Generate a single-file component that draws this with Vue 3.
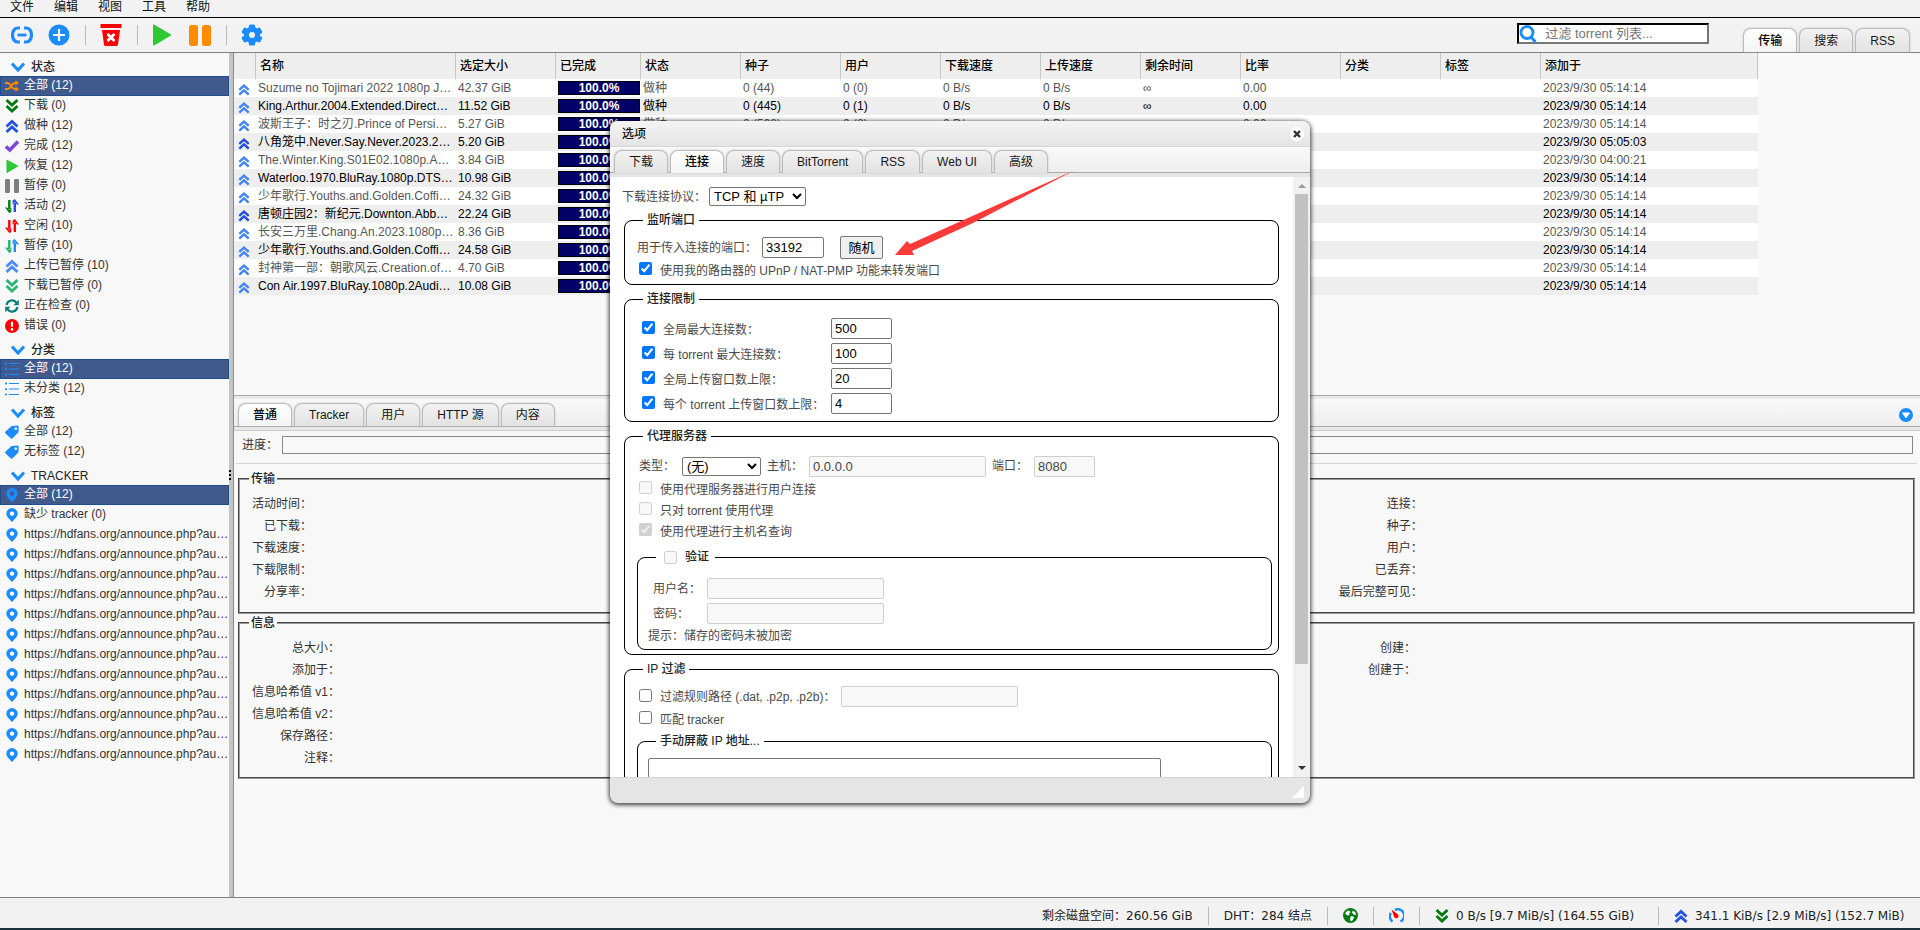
<script setup>
import { ref } from 'vue'

const menus = ['文件', '编辑', '视图', '工具', '帮助']

const statusFilters = [
  { icon: 'shuffle', color: '#ff8c00', text: '全部 (12)', active: true },
  { icon: 'down', color: '#007a0e', text: '下载 (0)' },
  { icon: 'up', color: '#2352e0', text: '做种 (12)' },
  { icon: 'check', color: '#7a45dd', text: '完成 (12)' },
  { icon: 'play', color: '#2dc834', text: '恢复 (12)' },
  { icon: 'pause', color: '#7f7f7f', text: '暂停 (0)' },
  { icon: 'arrows', color: '#007a0e', accent: '#2352e0', text: '活动 (2)' },
  { icon: 'arrows', color: '#ff0000', accent: '#ff0000', text: '空闲 (10)' },
  { icon: 'arrows', color: '#1fb36b', accent: '#1a8cff', text: '暂停 (10)' },
  { icon: 'up', color: '#4a8cf7', text: '上传已暂停 (10)' },
  { icon: 'down', color: '#2bb673', text: '下载已暂停 (0)' },
  { icon: 'sync', color: '#0b7d78', text: '正在检查 (0)' },
  { icon: 'error', color: '#ff0000', text: '错误 (0)' },
]
const blue = '#1a8cff'
const announce = Array.from({ length: 12 }, () => ({
  icon: 'pin', color: blue, text: 'https://hdfans.org/announce.php?au…',
}))
const groups = [
  { title: '状态', items: statusFilters },
  {
    title: '分类',
    items: [
      { icon: 'list', color: blue, text: '全部 (12)', active: true },
      { icon: 'list', color: blue, text: '未分类 (12)' },
    ],
  },
  {
    title: '标签',
    items: [
      { icon: 'tag', color: blue, text: '全部 (12)' },
      { icon: 'tag', color: blue, text: '无标签 (12)' },
    ],
  },
  {
    title: 'TRACKER',
    items: [
      { icon: 'pin', color: blue, text: '全部 (12)', active: true },
      { icon: 'pin', color: blue, text: '缺少 tracker (0)' },
      ...announce,
    ],
  },
]

const columns = [
  ['', 22], ['名称', 200], ['选定大小', 100], ['已完成', 85], ['状态', 100], ['种子', 100],
  ['用户', 100], ['下载速度', 100], ['上传速度', 100], ['剩余时间', 100], ['比率', 100],
  ['分类', 100], ['标签', 100], ['添加于', 217],
]
const torrent = (name, size, seeds, peers, added = '2023/9/30 05:14:14', uploading = false) =>
  ({ name, size, seeds, peers, added, uploading })
const torrents = [
  torrent('Suzume no Tojimari 2022 1080p J…', '42.37 GiB', '0 (44)', '0 (0)'),
  torrent('King.Arthur.2004.Extended.Direct…', '11.52 GiB', '0 (445)', '0 (1)'),
  torrent('波斯王子：时之刃.Prince of Persi…', '5.27 GiB', '0 (592)', '0 (2)'),
  torrent('八角笼中.Never.Say.Never.2023.2…', '5.20 GiB', '0 (120)', '1 (4)', '2023/9/30 05:05:03', true),
  torrent('The.Winter.King.S01E02.1080p.A…', '3.84 GiB', '0 (31)', '0 (0)', '2023/9/30 04:00:21'),
  torrent('Waterloo.1970.BluRay.1080p.DTS…', '10.98 GiB', '0 (86)', '0 (1)'),
  torrent('少年歌行.Youths.and.Golden.Coffi…', '24.32 GiB', '0 (57)', '0 (0)'),
  torrent('唐顿庄园2：新纪元.Downton.Abb…', '22.24 GiB', '0 (73)', '1 (2)', undefined, true),
  torrent('长安三万里.Chang.An.2023.1080p…', '8.36 GiB', '0 (210)', '0 (3)'),
  torrent('少年歌行.Youths.and.Golden.Coffi…', '24.58 GiB', '0 (62)', '0 (0)'),
  torrent('封神第一部：朝歌风云.Creation.of…', '4.70 GiB', '0 (340)', '0 (5)'),
  torrent('Con Air.1997.BluRay.1080p.2Audi…', '10.08 GiB', '0 (98)', '0 (1)'),
]

const viewTabs = ['传输', '搜索', 'RSS']
const detailTabs = ['普通', 'Tracker', '用户', 'HTTP 源', '内容']
const optionTabs = ['下载', '连接', '速度', 'BitTorrent', 'RSS', 'Web UI', '高级']

const transferInfo = [
  ['活动时间：', '剩余时间：', '连接：'],
  ['已下载：', '已上传：', '种子：'],
  ['下载速度：', '上传速度：', '用户：'],
  ['下载限制：', '上传限制：', '已丢弃：'],
  ['分享率：', '下次汇报：', '最后完整可见：'],
]
const generalInfo = [
  ['总大小：', '区块：', '创建：'],
  ['添加于：', '完成于：', '创建于：'],
  ['信息哈希值 v1：', '', ''],
  ['信息哈希值 v2：', '', ''],
  ['保存路径：', '', ''],
  ['注释：', '', ''],
]

const protocol = ref('TCP 和 µTP')
const port = ref('33192')
const upnp = ref(true)
const limits = ref([
  { on: true, label: '全局最大连接数：', value: '500' },
  { on: true, label: '每 torrent 最大连接数：', value: '100' },
  { on: true, label: '全局上传窗口数上限：', value: '20' },
  { on: true, label: '每个 torrent 上传窗口数上限：', value: '4' },
])
const proxyChecks = [
  { id: 'proxyPeers', on: false, label: '使用代理服务器进行用户连接' },
  { id: 'proxyTorrents', on: false, label: '只对 torrent 使用代理' },
  { id: 'proxyHosts', on: true, label: '使用代理进行主机名查询' },
]
const proxyType = ref('(无)')
const filterPath = ref(false)
const filterTracker = ref(false)
</script>

<template>
  <div class="app">
    <svg class="defs" width="0" height="0" aria-hidden="true">
      <symbol id="up" viewBox="0 0 14 14"><path d="M1.5 7.5 7 2.5l5.5 5M1.5 13 7 8l5.5 5" fill="none" stroke="currentColor" stroke-width="2.8" /></symbol>
      <symbol id="down" viewBox="0 0 14 14"><path d="M1.5 1 7 6l5.5-5M1.5 7 7 12l5.5-5" fill="none" stroke="currentColor" stroke-width="2.8" /></symbol>
      <symbol id="chevron" viewBox="0 0 14 14"><path d="M1 3.5 7 10l6-6.5" fill="none" stroke="currentColor" stroke-width="3" /></symbol>
      <symbol id="shuffle" viewBox="0 0 16 14"><path d="M0 3.5h3.2c3.6 0 4.2 7 7.8 7h2M0 10.5h3.2c3.6 0 4.2-7 7.8-7h2" fill="none" stroke="currentColor" stroke-width="2.2" /><path d="M12 .5 16 3.5l-4 3zM12 7.5l4 3-4 3z" fill="currentColor" /></symbol>
      <symbol id="check" viewBox="0 0 14 14"><path d="M1 7.5 4.8 11 13 2.5" fill="none" stroke="currentColor" stroke-width="3.4" /></symbol>
      <symbol id="play" viewBox="0 0 14 14"><path d="M2 1.2 12.8 7 2 13.5z" fill="currentColor" stroke="currentColor" stroke-linejoin="round" /></symbol>
      <symbol id="pause" viewBox="0 0 14 14"><rect width="5" height="14" rx="1.2" fill="currentColor" /><rect x="9" width="5" height="14" rx="1.2" fill="currentColor" /></symbol>
      <symbol id="arrows" viewBox="0 0 14 14"><path d="M4.3 1v9" stroke="currentColor" stroke-width="2.4" /><path d="M0 8.6h2.2L4.3 11l2-2.4V13L4.3 14z" fill="currentColor" /><path d="M9.8 13V4" stroke="var(--accent)" stroke-width="2.4" /><path d="M14 5.4h-2L9.8 3 7.6 5.4V1.6L9.8 0z" fill="var(--accent)" /></symbol>
      <symbol id="sync" viewBox="0 0 14 14"><path d="M1.5 6A5.6 5.6 0 0 1 11.6 3.8M12.5 8A5.6 5.6 0 0 1 2.4 10.2" fill="none" stroke="currentColor" stroke-width="2.2" /><path d="M13.8 .8v5.4H8.4zM.2 13.2V7.8h5.4z" fill="currentColor" /></symbol>
      <symbol id="error" viewBox="0 0 14 14"><circle cx="7" cy="7" r="7" fill="currentColor" /><path d="M7 2.8v5" stroke="#fff" stroke-width="2.2" /><circle cx="7" cy="10.4" r="1.3" fill="#fff" /></symbol>
      <symbol id="list" viewBox="0 0 14 14"><path d="M4 1.5h10M4 7h10M4 12.5h10" stroke="currentColor" stroke-width="1.2" /><circle cx="1" cy="1.5" r="1.1" fill="currentColor" /><circle cx="1" cy="7" r="1.1" fill="currentColor" /><circle cx="1" cy="12.5" r="1.1" fill="currentColor" /></symbol>
      <symbol id="tag" viewBox="0 0 14 14"><path fill-rule="evenodd" fill="currentColor" d="M7.4.9 12.3.6q1.4 0 1.4 1.4l-.2 4.8q0 .6-.5 1L7.6 13.3q-1 .9-2 0L.6 8.6q-1-1 0-2L6.3 1.3q.5-.4 1.1-.4zM10.8 2.3a1.3 1.3 0 1 0 .01 0z" /></symbol>
      <symbol id="pin" viewBox="0 0 14 14"><path fill-rule="evenodd" fill="currentColor" d="M7 0a5.7 5.7 0 0 1 5.7 5.7C12.7 8.5 9 11.5 7 14.2 5 11.5 1.3 8.5 1.3 5.7A5.7 5.7 0 0 1 7 0zm0 3.5a2.2 2.2 0 1 0 .01 0z" /></symbol>
    </svg>

    <nav class="menubar">
      <a v-for="m in menus" :key="m" href="#">{{ m }}</a>
    </nav>

    <header class="toolbar">
      <div class="tools">
        <button type="button" aria-label="添加链接">
          <svg width="22" height="22" viewBox="1 0 22 22" fill="none" stroke="#1a8cff" stroke-width="3.2"><path d="M10 4H7.500a5 7 0 0 0 0 14H10M14 4h2.500a5 7 0 0 1 0 14H14" /><path d="M7.500 11h9" stroke-width="2.800" /></svg>
        </button>
        <button type="button" aria-label="添加文件">
          <svg width="22" height="22" viewBox="0 0 22 22"><circle cx="11" cy="11" r="10.500" fill="#1a8cff" /><path d="M11 5v12M5 11h12" stroke="#fff" stroke-width="2.200" /></svg>
        </button>
        <span class="sep"></span>
        <button type="button" aria-label="删除">
          <svg width="22" height="22" viewBox="0 0 22 22"><path d="M.5 0h21v4H.5zM2 6h18l-2 14.500q-.2 1.500-1.700 1.500H5.700Q4.200 22 4 20.500z" fill="#f00" /><path d="m7.500 10 7 7m0-7-7 7" stroke="#fff" stroke-width="2.800" /></svg>
        </button>
        <span class="sep"></span>
        <button type="button" aria-label="恢复">
          <svg width="22" height="22" viewBox="0 0 22 22"><path d="M2 1.500 18 11 2 20.500z" fill="#2dc834" stroke="#2dc834" stroke-width="2" stroke-linejoin="round" /></svg>
        </button>
        <button type="button" aria-label="暂停">
          <svg width="22" height="22" viewBox="0 0 22 22" fill="#ff8c00"><rect y="1" width="9" height="21" rx="2.500" /><rect x="13" y="1" width="9" height="21" rx="2.500" /></svg>
        </button>
        <span class="sep"></span>
        <button type="button" aria-label="选项">
          <svg width="22" height="22" viewBox="-11 -11 22 22"><g fill="#1a8cff"><circle r="8.200" /><rect v-for="a in [0, 60, 120]" :key="a" x="-3.200" y="-10.600" width="6.400" height="21.200" rx="1.500" :transform="`rotate(${a})`" /></g><circle r="3" fill="#f2f2f2" /></svg>
        </button>
      </div>
      <label class="search">
        <svg width="18" height="18" viewBox="0 0 18 18" fill="none" stroke="#1a8cff"><circle cx="8" cy="7.500" r="6" stroke-width="2.800" /><path d="m12 12 4.500 5" stroke-width="3" /></svg>
        <input type="text" placeholder="过滤 torrent 列表..." aria-label="过滤 torrent 列表" />
      </label>
      <div class="tabs view-tabs">
        <button v-for="(t, i) in viewTabs" :key="t" type="button" class="tab" :class="{ on: i === 0 }">{{ t }}</button>
      </div>
    </header>

    <main class="desktop">
      <aside class="sidebar">
        <section v-for="g in groups" :key="g.title">
          <h2><svg width="14" height="14"><use href="#chevron" /></svg>{{ g.title }}</h2>
          <ul>
            <li v-for="(f, i) in g.items" :key="i" :class="{ active: f.active }">
              <svg width="14" height="14" :style="{ color: f.color, '--accent': f.accent }"><use :href="'#' + f.icon" /></svg>
              <a href="#">{{ f.text }}</a>
            </li>
          </ul>
        </section>
      </aside>
      <div class="splitter"><i></i><i></i><i></i></div>

      <div class="content">
        <section class="list">
          <table>
            <colgroup><col v-for="(c, i) in columns" :key="i" :style="{ width: c[1] + 'px' }" /></colgroup>
            <thead>
              <tr><th v-for="(c, i) in columns" :key="i">{{ c[0] }}</th></tr>
            </thead>
            <tbody>
              <tr v-for="(t, i) in torrents" :key="i">
                <td class="state"><svg width="12" height="13" :class="{ uploading: t.uploading }"><use href="#up" /></svg></td>
                <td>{{ t.name }}</td>
                <td>{{ t.size }}</td>
                <td><div class="done">100.0%</div></td>
                <td>做种</td>
                <td>{{ t.seeds }}</td>
                <td>{{ t.peers }}</td>
                <td>0 B/s</td>
                <td>0 B/s</td>
                <td>∞</td>
                <td>0.00</td>
                <td></td>
                <td></td>
                <td>{{ t.added }}</td>
              </tr>
            </tbody>
          </table>
        </section>

        <section class="details">
          <div class="tabstrip">
            <div class="tabs">
              <button v-for="(t, i) in detailTabs" :key="t" type="button" class="tab" :class="{ on: i === 0 }">{{ t }}</button>
            </div>
            <button type="button" class="collapse" aria-label="折叠">
              <svg width="14" height="14" viewBox="0 0 14 14"><circle cx="7" cy="7" r="7" fill="#1a8cff" /><path d="M3.500 5h7L7 9.800z" fill="#fff" stroke="#fff" stroke-linejoin="round" /></svg>
            </button>
          </div>
          <div class="progress"><span>进度：</span><div></div></div>
          <hr />
          <fieldset class="info transfer">
            <legend>传输</legend>
            <div class="grid">
              <template v-for="(r, i) in transferInfo" :key="i">
                <template v-for="(c, j) in r" :key="j"><span>{{ c }}</span><span></span></template>
              </template>
            </div>
          </fieldset>
          <fieldset class="info general">
            <legend>信息</legend>
            <div class="grid">
              <template v-for="(r, i) in generalInfo" :key="i">
                <template v-for="(c, j) in r" :key="j"><span>{{ c }}</span><span></span></template>
              </template>
            </div>
          </fieldset>
        </section>
      </div>
    </main>

    <footer class="statusbar">
      <span>剩余磁盘空间：260.56 GiB</span>
      <span>DHT：284 结点</span>
      <span>
        <svg width="15" height="15" viewBox="0 0 15 15"><circle cx="7.500" cy="7.500" r="7.500" fill="#067a12" /><path d="M2 5.500 4.500 2.500l2.500.5.500 1.500-1.500 1 .5 1.500-2 .5zM10 2.500l2.500 2 .5 2.500-2.500-.5-1.500-2zM8 8l2.500.5.5 1.500-2 3-1.500.3-.5-2.500z" fill="#fff" /></svg>
      </span>
      <span>
        <svg width="15" height="15" viewBox="0 0 15 15"><path d="M3.500 13.500A6.300 6.300 0 0 1 1.800 5M6 1.800A6.300 6.300 0 0 1 11.500 13.500" fill="none" stroke="#1a8cff" stroke-width="2.400" /><path d="M2.500 1.500 9 6.500A2.300 2.300 0 1 1 5 8.500z" fill="#f00" /></svg>
      </span>
      <span class="down"><svg width="14" height="16"><use href="#down" /></svg>0 B/s [9.7 MiB/s] (164.55 GiB)</span>
      <span class="up"><svg width="14" height="16"><use href="#up" /></svg>341.1 KiB/s [2.9 MiB/s] (152.7 MiB)</span>
    </footer>

    <section class="dialog" role="dialog" aria-labelledby="dialogTitle">
      <div class="titlebar">
        <h1 id="dialogTitle">选项</h1>
        <button type="button" aria-label="关闭"><svg width="14" height="14" viewBox="0 0 14 14"><circle cx="7" cy="7" r="7" fill="#fff" /><path d="m4 4 6 6m0-6-6 6" stroke="#333" stroke-width="2.400" /></svg></button>
      </div>
      <div class="tabstrip">
        <div class="tabs">
          <button v-for="(t, i) in optionTabs" :key="t" type="button" class="tab" :class="{ on: i === 1 }">{{ t }}</button>
        </div>
      </div>
      <div class="viewport">
        <form class="options" @submit.prevent>
          <div class="row protocol">
            <label for="protocol">下载连接协议：</label>
            <select id="protocol" v-model="protocol"><option>TCP 和 µTP</option><option>TCP</option><option>µTP</option></select>
          </div>

          <fieldset class="box port">
            <legend>监听端口</legend>
            <div class="row">
              <label for="port">用于传入连接的端口：</label>
              <input id="port" v-model="port" type="text" />
              <button type="button" class="random">随机</button>
            </div>
            <div class="row check">
              <input id="upnp" v-model="upnp" type="checkbox" /><label for="upnp">使用我的路由器的 UPnP / NAT-PMP 功能来转发端口</label>
            </div>
          </fieldset>

          <fieldset class="box limits">
            <legend>连接限制</legend>
            <div v-for="(l, i) in limits" :key="i" class="row check">
              <input :id="'limit' + i" v-model="l.on" type="checkbox" /><label :for="'limit' + i">{{ l.label }}</label>
              <input v-model="l.value" type="text" class="short" :aria-label="l.label" />
            </div>
          </fieldset>

          <fieldset class="box proxy">
            <legend>代理服务器</legend>
            <div class="row server">
              <label for="proxyType">类型：</label>
              <select id="proxyType" v-model="proxyType"><option>(无)</option><option>SOCKS4</option><option>SOCKS5</option><option>HTTP</option></select>
              <label for="proxyHost">主机：</label>
              <input id="proxyHost" type="text" value="0.0.0.0" class="long" disabled />
              <label for="proxyPort">端口：</label>
              <input id="proxyPort" type="text" value="8080" class="short" disabled />
            </div>
            <div v-for="c in proxyChecks" :key="c.id" class="row check">
              <input :id="c.id" type="checkbox" :checked="c.on" disabled /><label :for="c.id">{{ c.label }}</label>
            </div>
            <fieldset class="box auth">
              <legend><input id="auth" type="checkbox" disabled /><label for="auth">验证</label></legend>
              <div class="row cred"><label for="user">用户名：</label><input id="user" type="text" class="long" disabled /></div>
              <div class="row cred"><label for="pass">密码：</label><input id="pass" type="password" class="long" disabled /></div>
              <p>提示：储存的密码未被加密</p>
            </fieldset>
          </fieldset>

          <fieldset class="box filter">
            <legend>IP 过滤</legend>
            <div class="row check path">
              <input id="filterPath" v-model="filterPath" type="checkbox" /><label for="filterPath">过滤规则路径 (.dat, .p2p, .p2b)：</label>
              <input type="text" class="long" aria-label="过滤规则路径" disabled />
            </div>
            <div class="row check">
              <input id="filterTracker" v-model="filterTracker" type="checkbox" /><label for="filterTracker">匹配 tracker</label>
            </div>
            <fieldset class="box banned">
              <legend>手动屏蔽 IP 地址...</legend>
              <textarea rows="5" aria-label="手动屏蔽 IP 地址"></textarea>
            </fieldset>
          </fieldset>
        </form>
        <div class="scrollbar">
          <svg width="8" height="4" viewBox="0 0 8 4"><path d="M4 0 8 4H0z" fill="#999" /></svg>
          <div class="track"><div class="thumb"></div></div>
          <svg width="8" height="4" viewBox="0 0 8 4"><path d="M0 0h8L4 4z" fill="#333" /></svg>
        </div>
      </div>
      <div class="dialog-foot"><svg width="12" height="12" viewBox="0 0 12 12"><path d="M12 0v12H0z" fill="#fff" /></svg></div>
      <svg class="pointer" width="182" height="88" viewBox="0 0 182 88"><path d="m0 86 12-14 3 3L180 1 78 54 17 82l2 4z" fill="#fb3b3a" /></svg>
    </section>
  </div>
</template>

<style>
body {
  margin: 0;
  background: #f8f8f8;
}
</style>

<style scoped>
.app {
  display: flex;
  flex-direction: column;
  min-height: 100vh;
  position: relative;
  color: #333;
  font: 12px/18px "Liberation Sans", "Noto Sans CJK SC", sans-serif;
}
.app * { box-sizing: border-box; }
.defs { position: absolute; }
svg { display: block; flex: none; }
a { color: inherit; text-decoration: none; }
button { padding: 0; border: 0; background: none; color: inherit; font: inherit; }
ul, h1, h2, p { margin: 0; padding: 0; list-style: none; font: inherit; }

.menubar {
  display: flex;
  gap: 20px;
  height: 18px;
  padding-left: 10px;
  border-bottom: 1px solid #000;
  background: #f2f2f2;
  color: #111;
  line-height: 15px;
}
.toolbar {
  display: flex;
  height: 35px;
  border-bottom: 1px solid #808080;
  background: #f2f2f2;
}
.tools { display: flex; flex: 1; align-items: center; gap: 15px; padding-left: 11px; }
.sep { width: 1px; height: 20px; margin-right: -1px; background: #bbb; }
.search {
  display: flex;
  align-items: center;
  align-self: flex-start;
  width: 192px;
  height: 21px;
  margin: 5px 34px 0 0;
  border: 2px inset #000;
  border-color: #000 #767676 #767676 #000;
  background: #fff;
}
.search input { flex: 1; min-width: 0; padding: 0 0 0 8px; border: 0; outline: 0; background: none; font: inherit; font-size: 13px; }
.search input::placeholder { color: #757575; }

.tabs { display: flex; align-items: flex-end; gap: 2px; }
.tab {
  height: 23px;
  padding: 0 14px;
  border: 1px solid #bcbcbc;
  border-bottom: 0;
  border-radius: 8px 8px 0 0;
  background: linear-gradient(#f2f2f2, #e2e2e2);
  box-shadow: 0 0 2px #bbb;
  color: #181818;
  line-height: 22px;
}
.tab.on { background: linear-gradient(#fff, #f4f4f4); color: #000; font-weight: 500; }
.view-tabs { padding-right: 10px; }
.view-tabs .tab { height: 24px; }

.desktop { display: flex; flex: 1; background: #f8f8f8; }
.sidebar { width: 229px; }
.sidebar h2 { display: flex; align-items: center; gap: 6px; height: 23px; padding: 4px 0 0 11px; color: #222; font-weight: 500; }
.sidebar h2 svg, .sidebar li svg { color: #1a8cff; }
.sidebar li { display: flex; gap: 5px; height: 20px; padding: 3px 0 0 5px; line-height: 13px; white-space: nowrap; }
.sidebar li.active { box-shadow: inset 0 0 0 1px #1d4f8e; background: #415a8d; color: #fff; }
.splitter {
  display: flex;
  flex-direction: column;
  justify-content: center;
  gap: 2px;
  width: 5px;
  border-right: 1px solid #8a8a8a;
  background: #c4c4c4;
}
.splitter i { width: 2px; height: 2px; background: #000; }

.content { display: grid; flex: 1; grid-template-rows: 342fr 502fr; min-width: 0; }
.list { overflow: hidden; }
table { table-layout: fixed; width: 1524px; border-collapse: separate; border-spacing: 0; }
th {
  height: 26px;
  padding: 0 0 0 4px;
  border-right: 1px solid #c6c6c6;
  background: #eee;
  color: #000;
  font-weight: 500;
  text-align: left;
}
td { height: 18px; padding: 0 2px; overflow: hidden; line-height: 18px; white-space: nowrap; color: #555; }
tbody tr { background: #fff; }
tbody tr:nth-child(even) { background: #eee; }
tbody tr:nth-child(even) td { color: #000; }
.state { padding: 3px 0 0 4px; }
.state svg { color: #4284f3; }
.state svg.uploading { color: #1d4ed8; }
.done {
  height: 14px;
  margin-right: -1px;
  border: 1px solid #000;
  background: #000066;
  color: #fff;
  font-weight: 700;
  line-height: 12px;
  text-align: center;
}

.details { border-top: 1px solid #aaa; }
.tabstrip {
  display: flex;
  align-items: flex-end;
  justify-content: space-between;
  background: linear-gradient(#f9f9f9, #eee);
}
.details .tabstrip { height: 31px; margin-bottom: 9px; padding-left: 4px; border-top: 3px solid #e9e9e9; border-bottom: 1px solid #aaa; box-shadow: 0 3px #e8e8e8, 0 4px #ccc; }
.collapse { padding: 0 7px 4px 0; }
.progress { display: flex; align-items: center; gap: 4px; padding: 0 7px 0 8px; }
.progress span { width: 36px; }
.progress div { flex: 1; height: 18px; border: 1px solid #888; }
hr { height: 1px; margin: 9px 3px 6px 2px; border: 0; background: #d4d4d4; }
.info { margin: 0 5px 0 4px; padding: 5px 7px 8px 12px; border: 2px groove #c0c0c0; border-color: #999; }
.info legend { padding: 0 2px; margin-left: -3px; font-weight: 500; color: #222; }
.info.transfer { padding-bottom: 9px; }
.grid { display: grid; line-height: 22px; grid-auto-rows: 22px; text-align: right; white-space: nowrap; }
.transfer .grid { grid-template-columns: 60px 1fr 60px 1fr 84px 1fr; }
.general .grid { grid-template-columns: 88px 1fr 48px 1fr 48px 1fr; }

.statusbar {
  display: flex;
  justify-content: flex-end;
  align-items: center;
  height: 33px;
  padding: 5px 7px 0 0;
  border-top: 1px solid #808080;
  border-bottom: 2px solid #1a323b;
  background: #f2f2f2;
  color: #222;
  font-family: "DejaVu Sans", "Noto Sans CJK SC", sans-serif;
  white-space: nowrap;
}
.statusbar span { display: flex; align-items: center; gap: 7px; height: 18px; }
.statusbar span + span { margin-left: 15px; padding-left: 15px; border-left: 1px solid #bbb; }
.statusbar .down { width: 224px; }
.statusbar .up { width: 255px; }
.down svg { color: #007a0e; }
.up svg { color: #2352e0; }

.dialog {
  position: absolute;
  top: 121px;
  left: calc(50% - 350px);
  display: flex;
  flex-direction: column;
  width: 700px;
  height: 682px;
  border-radius: 8px;
  background: #e5e5e5;
  box-shadow: 0 1px 4px 1px rgba(0, 0, 0, .75);
}
.titlebar {
  display: flex;
  align-items: center;
  justify-content: space-between;
  height: 26px;
  padding: 0 6px 0 12px;
  border-bottom: 1px solid #d5d5d5;
  border-radius: 8px 8px 0 0;
  background: linear-gradient(#f4f4f4, #e4e4e4);
  color: #111;
}
.titlebar h1 { font-weight: 500; }
.dialog .tabstrip { height: 30px; padding-left: 4px; border-bottom: 4px solid #e5e5e5; box-shadow: inset 0 -1px #aaa; }
.viewport { display: flex; flex: 1; min-height: 0; }
.options { flex: 1; height: 600px; padding: 10px 14px 0; overflow: hidden; background: #fff; color: #4a4a4a; }
.scrollbar { display: flex; flex-direction: column; align-items: center; justify-content: space-between; width: 17px; padding: 7px 2px; background: #f1f1f1; }
.track { flex: 1; align-self: stretch; margin: 6px 0; }
.thumb { height: 83%; background: #c1c1c1; }
.dialog-foot { display: flex; justify-content: flex-end; height: 26px; padding: 8px 6px 0 0; border-top: 1px solid #d3d3d3; }
.pointer { position: absolute; top: 48px; left: 285px; }

.row { display: flex; align-items: center; }
.protocol { gap: 3px; margin-left: -2px; margin-bottom: 5px; height: 19px; }
.options input[type="text"], .options input[type="password"], .random, select, textarea {
  border: 1px solid #767676;
  border-radius: 2px;
  background: #fff;
  color: #000;
  font: 13px/19px "Liberation Sans", "Noto Sans CJK SC", sans-serif;
}
.options input[type="text"], .options input[type="password"] { height: 21px; padding: 0 3px; }
.options input:disabled[type="text"], .options input:disabled[type="password"] { border-color: #cfcfcf; background: #f8f8f8; color: #444; }
.options input[type="checkbox"] { width: 13px; height: 13px; margin: 0; }
select { height: 19px; padding: 0; line-height: 17px; }
.protocol select { width: 97px; }
.short { width: 61px; }
.long { width: 177px; }
.box { min-width: 0; margin: 0 0 5px; padding: 7px 6px 4px 12px; border: 1px solid #000; border-radius: 8px; }
.box > legend { height: 18px; margin-left: 6px; padding: 0 4px; color: #222; font-weight: 500; }
.check { height: 21px; padding-left: 2px; }
.options .check input[type="checkbox"] { margin-bottom: 2px; }
.check label { margin-left: 8px; padding-top: 2px; }
.port #port { width: 62px; margin: 0 16px 0 5px; }
.random { width: 43px; height: 23px; background: #efefef; }
.limits { padding: 8px 6px 5px 15px; }
.limits > legend { margin-left: 3px; }
.limits .row { height: 25px; }
.limits label { width: 168px; }
.proxy { padding-top: 9px; }
.server { height: 24px; padding-left: 2px; }
.server select { width: 79px; margin: 0 6px 0 7px; }
.server .long { margin: 0 6px; }
.server .short { margin-left: 6px; }
.auth { margin: 7px 0 0; padding: 10px 6px 3px 10px; }
.auth > legend { display: flex; align-items: center; gap: 8px; margin-left: 8px; padding: 0 6px 0 8px; }
.cred { height: 25px; padding-left: 5px; }
.cred label { width: 54px; }
.auth p { line-height: 20px; }
.filter { padding-top: 6px; }
.filter .path { height: 24px; }
.path .long { margin-left: 6px; }
.banned { margin: 3px 0 0; padding: 8px 6px 6px 10px; }
.banned > legend { margin-left: 8px; }
textarea { display: block; width: 513px; height: 90px; resize: none; }
</style>
